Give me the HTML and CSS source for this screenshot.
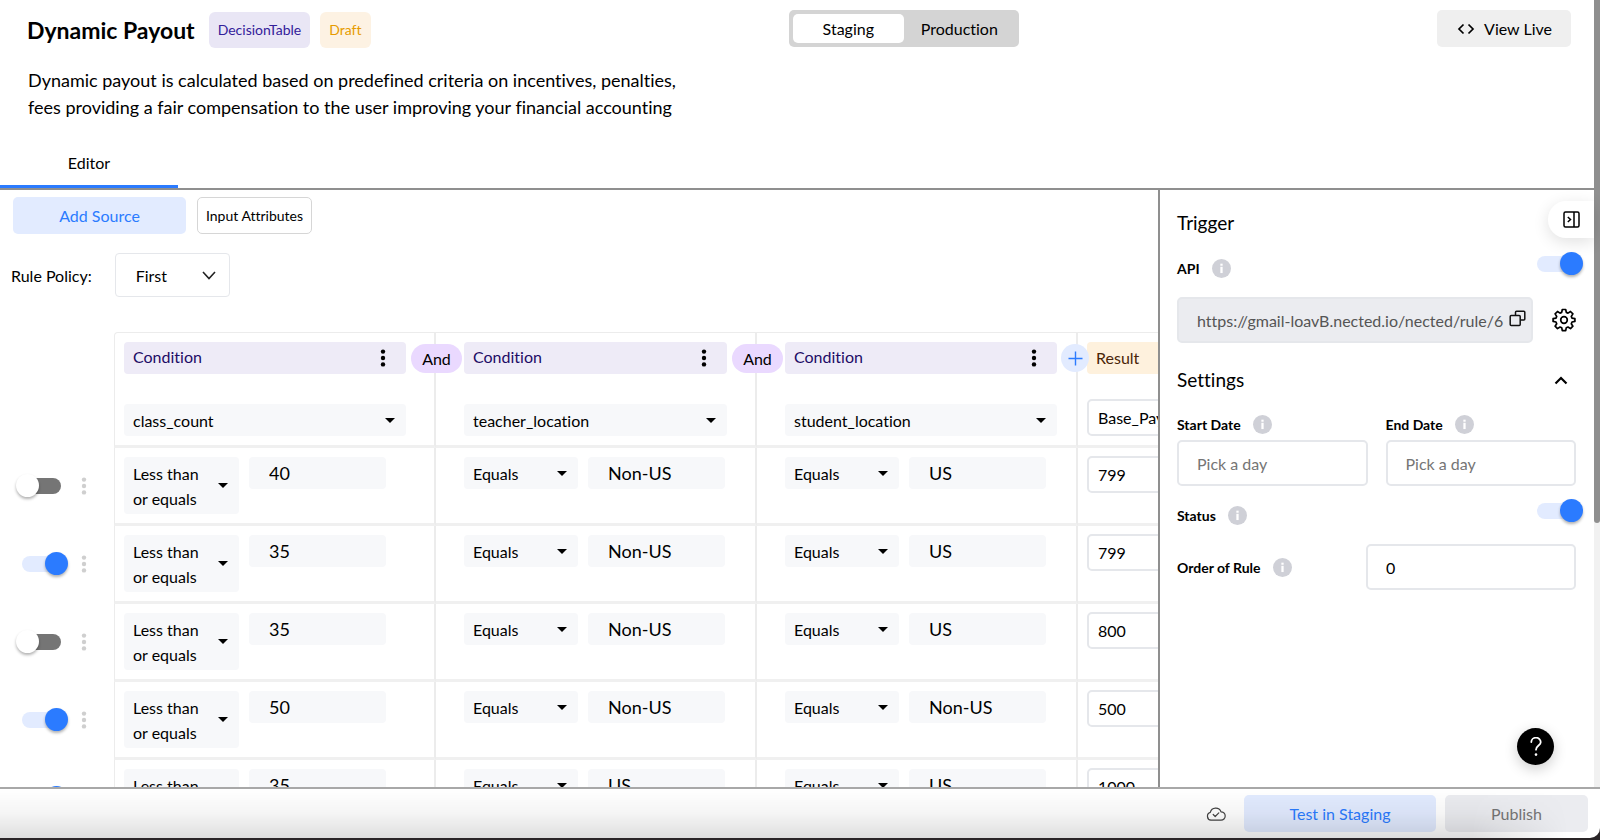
FILE: index.html
```html
<!DOCTYPE html>
<html lang="en">

  <head>
    <meta charset="utf-8">
    <title>Dynamic Payout</title>
    <link rel="stylesheet" href="styles.css">
  </head>

  <body>

    <!-- shared icons -->
    <svg class="sprite" aria-hidden="true">
      <symbol id="icon-info" viewBox="0 0 20 20">
        <circle cx="10" cy="10" r="10" fill="#cfd0d7"/>
        <rect x="8.8" y="8.2" width="2.4" height="6.6" fill="#fff"/>
        <rect x="8.8" y="4.9" width="2.4" height="2.2" fill="#fff"/>
      </symbol>
      <symbol id="icon-dots" viewBox="0 0 6 18">
        <circle cx="3" cy="2.6" r="2.2"/>
        <circle cx="3" cy="9" r="2.2"/>
        <circle cx="3" cy="15.4" r="2.2"/>
      </symbol>
    </svg>

    <div class="page">

      <div class="app">

        <!-- header -->
        <header class="header">
          <div class="header-top">
            <div class="title-group">
              <h1>Dynamic Payout</h1>
              <span class="badge badge-type">DecisionTable</span>
              <span class="badge badge-draft">Draft</span>
            </div>
            <div class="env-switch">
              <button type="button" class="env active">Staging</button>
              <button type="button" class="env">Production</button>
            </div>
            <button type="button" class="btn view-live">
              <svg width="18" height="12" viewBox="0 0 18 12" fill="none" stroke="#000" stroke-width="1.7"><path d="M6.500 1.500L2 6l4.500 4.500M11.500 1.500L16 6l-4.500 4.500"/></svg>
              View Live
            </button>
          </div>
          <p class="description">Dynamic payout is calculated based on predefined criteria on incentives, penalties, fees providing a fair compensation to the user improving your financial accounting</p>
          <nav class="tabs">
            <a href="#editor" class="tab">Editor</a>
          </nav>
        </header>

        <div class="content">

          <!-- rule editor -->
          <main class="editor" id="editor">
            <div class="toolbar">
              <button type="button" class="btn add-source">Add Source</button>
              <button type="button" class="btn input-attributes">Input Attributes</button>
            </div>

            <div class="policy">
              <label for="policy">Rule Policy:</label>
              <select id="policy" class="policy-select">
                <option>First</option>
              </select>
            </div>

            <table class="rules">
              <colgroup>
                <col class="col-state">
                <col class="col-first">
                <col class="col-rule">
                <col class="col-rule">
                <col class="col-rule">
              </colgroup>
              <thead>
                <tr>
                  <td></td>
                  <th class="first">
                    <div class="condition">Condition <button type="button" class="dots" aria-label="Condition menu"><svg width="6" height="18"><use href="#icon-dots"/></svg></button></div>
                    <select class="pick" aria-label="Attribute"><option>class_count</option></select>
                    <span class="joiner">And</span>
                  </th>
                  <th>
                    <div class="condition">Condition <button type="button" class="dots" aria-label="Condition menu"><svg width="6" height="18"><use href="#icon-dots"/></svg></button></div>
                    <select class="pick" aria-label="Attribute"><option>teacher_location</option></select>
                    <span class="joiner">And</span>
                  </th>
                  <th class="last">
                    <div class="condition">Condition <button type="button" class="dots" aria-label="Condition menu"><svg width="6" height="18"><use href="#icon-dots"/></svg></button></div>
                    <select class="pick" aria-label="Attribute"><option>student_location</option></select>
                    <button type="button" class="add-column" aria-label="Add condition"><svg width="15" height="15" viewBox="0 0 15 15" stroke="#2b7bff" stroke-width="1.4"><path d="M7.500 0.500v14M0.500 7.500h14"/></svg></button>
                  </th>
                  <th class="result">
                    <div class="condition result-title">Result</div>
                    <input class="result-input" type="text" aria-label="Result name" value="Base_Payout">
                  </th>
                </tr>
              </thead>
              <tbody>
                <tr>
                  <td class="state"><div class="state-row"><input type="checkbox" class="toggle" aria-label="Row 1 enabled"><svg class="drag" width="6" height="18"><use href="#icon-dots"/></svg></div></td>
                  <td class="first"><div class="pair"><select class="pick wrap" aria-label="Operator"><option>Less than or equals</option></select><input class="value" type="text" aria-label="class_count" value="40"></div></td>
                  <td><div class="pair"><select class="pick" aria-label="Operator"><option>Equals</option></select><input class="value" type="text" aria-label="teacher_location" value="Non-US"></div></td>
                  <td class="last"><div class="pair"><select class="pick" aria-label="Operator"><option>Equals</option></select><input class="value" type="text" aria-label="student_location" value="US"></div></td>
                  <td class="result"><input class="result-input" type="text" aria-label="Base_Payout" value="799"></td>
                </tr>
                <tr>
                  <td class="state"><div class="state-row"><input type="checkbox" class="toggle" aria-label="Row 2 enabled" checked><svg class="drag" width="6" height="18"><use href="#icon-dots"/></svg></div></td>
                  <td class="first"><div class="pair"><select class="pick wrap" aria-label="Operator"><option>Less than or equals</option></select><input class="value" type="text" aria-label="class_count" value="35"></div></td>
                  <td><div class="pair"><select class="pick" aria-label="Operator"><option>Equals</option></select><input class="value" type="text" aria-label="teacher_location" value="Non-US"></div></td>
                  <td class="last"><div class="pair"><select class="pick" aria-label="Operator"><option>Equals</option></select><input class="value" type="text" aria-label="student_location" value="US"></div></td>
                  <td class="result"><input class="result-input" type="text" aria-label="Base_Payout" value="799"></td>
                </tr>
                <tr>
                  <td class="state"><div class="state-row"><input type="checkbox" class="toggle" aria-label="Row 3 enabled"><svg class="drag" width="6" height="18"><use href="#icon-dots"/></svg></div></td>
                  <td class="first"><div class="pair"><select class="pick wrap" aria-label="Operator"><option>Less than or equals</option></select><input class="value" type="text" aria-label="class_count" value="35"></div></td>
                  <td><div class="pair"><select class="pick" aria-label="Operator"><option>Equals</option></select><input class="value" type="text" aria-label="teacher_location" value="Non-US"></div></td>
                  <td class="last"><div class="pair"><select class="pick" aria-label="Operator"><option>Equals</option></select><input class="value" type="text" aria-label="student_location" value="US"></div></td>
                  <td class="result"><input class="result-input" type="text" aria-label="Base_Payout" value="800"></td>
                </tr>
                <tr>
                  <td class="state"><div class="state-row"><input type="checkbox" class="toggle" aria-label="Row 4 enabled" checked><svg class="drag" width="6" height="18"><use href="#icon-dots"/></svg></div></td>
                  <td class="first"><div class="pair"><select class="pick wrap" aria-label="Operator"><option>Less than or equals</option></select><input class="value" type="text" aria-label="class_count" value="50"></div></td>
                  <td><div class="pair"><select class="pick" aria-label="Operator"><option>Equals</option></select><input class="value" type="text" aria-label="teacher_location" value="Non-US"></div></td>
                  <td class="last"><div class="pair"><select class="pick" aria-label="Operator"><option>Equals</option></select><input class="value" type="text" aria-label="student_location" value="Non-US"></div></td>
                  <td class="result"><input class="result-input" type="text" aria-label="Base_Payout" value="500"></td>
                </tr>
                <tr>
                  <td class="state"><div class="state-row"><input type="checkbox" class="toggle" aria-label="Row 5 enabled" checked><svg class="drag" width="6" height="18"><use href="#icon-dots"/></svg></div></td>
                  <td class="first"><div class="pair"><select class="pick wrap" aria-label="Operator"><option>Less than or equals</option></select><input class="value" type="text" aria-label="class_count" value="35"></div></td>
                  <td><div class="pair"><select class="pick" aria-label="Operator"><option>Equals</option></select><input class="value" type="text" aria-label="teacher_location" value="US"></div></td>
                  <td class="last"><div class="pair"><select class="pick" aria-label="Operator"><option>Equals</option></select><input class="value" type="text" aria-label="student_location" value="US"></div></td>
                  <td class="result"><input class="result-input" type="text" aria-label="Base_Payout" value="1000"></td>
                </tr>
              </tbody>
            </table>
          </main>

          <!-- trigger and settings -->
          <aside class="sidebar">
            <button type="button" class="collapse" aria-label="Collapse panel">
              <svg width="17" height="17" viewBox="0 0 17 17" fill="none" stroke="#000" stroke-width="1.5"><rect x="1" y="1" width="15" height="15" rx="1.500"/><path d="M11 1v15M4.800 6l2.700 2.500-2.700 2.500"/></svg>
            </button>

            <h2>Trigger</h2>
            <div class="row">
              <label for="api">API</label>
              <svg class="info" width="19" height="19"><use href="#icon-info"/></svg>
              <input type="checkbox" id="api" class="toggle" checked>
            </div>
            <div class="url-row">
              <div class="url-box">
                <input type="text" class="url" aria-label="API URL" value="https://gmail-loavB.nected.io/nected/rule/6" readonly>
                <button type="button" class="icon-btn" aria-label="Copy">
                  <svg width="17" height="20" viewBox="0 0 17 20" fill="none" stroke="#111" stroke-width="1.500"><path d="M6.500 5V2.200A1 1 0 0 1 7.500 1.200H14.800A1 1 0 0 1 15.800 2.200V9A1 1 0 0 1 14.800 10H11.500"/><rect x="1.200" y="5.500" width="10" height="10" rx="1"/></svg>
                </button>
              </div>
              <button type="button" class="icon-btn gear" aria-label="API settings">
                <svg width="24" height="24" viewBox="0 0 24 24" fill="none" stroke="#000" stroke-width="1.700" stroke-linejoin="round"><path d="M10.3 1.500h3.400l.6 2.900 1.700.7 2.500-1.600 2.400 2.400-1.600 2.500.7 1.700 2.900.6v2.700l-2.900.6-.7 1.700 1.600 2.500-2.400 2.400-2.500-1.600-1.700.7-.6 2.900h-3.400l-.6-2.900-1.700-.7-2.500 1.600-2.400-2.400 1.600-2.500-.7-1.700-2.900-.6v-2.700l2.900-.6.7-1.700-1.600-2.500 2.400-2.400 2.500 1.600 1.700-.7z"/><circle cx="12" cy="12" r="3.300"/></svg>
              </button>
            </div>

            <div class="settings-title">
              <h2>Settings</h2>
              <button type="button" class="icon-btn" aria-label="Collapse settings">
                <svg width="14" height="9" viewBox="0 0 14 9" fill="none" stroke="#000" stroke-width="2.200"><path d="M1.500 7.500L7 2l5.500 5.500"/></svg>
              </button>
            </div>
            <div class="dates">
              <div>
                <div class="row">
                  <label for="start">Start Date</label>
                  <svg class="info" width="19" height="19"><use href="#icon-info"/></svg>
                </div>
                <input type="text" id="start" class="field" placeholder="Pick a day">
              </div>
              <div>
                <div class="row">
                  <label for="end">End Date</label>
                  <svg class="info" width="19" height="19"><use href="#icon-info"/></svg>
                </div>
                <input type="text" id="end" class="field" placeholder="Pick a day">
              </div>
            </div>
            <div class="row">
              <label for="status">Status</label>
              <svg class="info" width="19" height="19"><use href="#icon-info"/></svg>
              <input type="checkbox" id="status" class="toggle" checked>
            </div>
            <div class="row">
              <label for="order">Order of Rule</label>
              <svg class="info" width="19" height="19"><use href="#icon-info"/></svg>
              <input type="text" id="order" class="field order" value="0">
            </div>
          </aside>
        </div>
      </div>

      <div class="scrollbar"><div class="thumb"></div></div>
    </div>

    <!-- footer -->
    <footer class="footer">
      <svg class="cloud" width="20" height="14" viewBox="0 0 20 14" fill="none" stroke="#444" stroke-width="1.200" stroke-linecap="round" stroke-linejoin="round"><path d="M5 13.200A4 4 0 0 1 4.300 5.400 5.600 5.600 0 0 1 15 4.800 4.200 4.200 0 0 1 15 13.200z"/><path d="M7.200 7.500l2 2 3.600-3.600"/></svg>
      <button type="button" class="btn test">Test in Staging</button>
      <button type="button" class="btn publish">Publish</button>
    </footer>

    <button type="button" class="help" aria-label="Help">
      <svg width="14" height="20" viewBox="0 0 14 20" fill="none" stroke="#fff" stroke-width="1.800" stroke-linecap="round"><path d="M2.300 5A4.700 4.400 0 0 1 11.700 5.200C11.700 8.500 7 8.600 7 12.700"/><circle cx="7" cy="17.600" r="1.300" fill="#fff" stroke="none"/></svg>
    </button>

  </body>

</html>
```
FILE: styles.css
```css
* {
    box-sizing: border-box;
}

body {
    margin: 0;
    height: 100vh;
    display: flex;
    flex-direction: column;
    overflow: hidden;
    background: #2a2527;
    color: #000;
    font-family: Lato, "Liberation Sans", sans-serif;
    font-size: 16px;
    font-variant-ligatures: none;
}

button, input, select {
    font-family: inherit;
    font-size: inherit;
    font-variant-ligatures: inherit;
    color: inherit;
    margin: 0;
}

button {
    border: none;
    background: none;
    padding: 0;
    cursor: pointer;
}

.sprite {
    display: none;
}

.page {
    flex: 1;
    min-height: 0;
    display: flex;
    background: #fff;
}

.app {
    flex: 1;
    min-width: 0;
    display: flex;
    flex-direction: column;
}

.scrollbar {
    width: 6px;
    background: #f1f1f1;
}

.scrollbar .thumb {
    height: 66.500%;
    background: #8f8f8f;
    border-radius: 0 0 3px 3px;
}

/* header */
.header {
    border-bottom: 2px solid #8f8f8f;
}

.header-top {
    display: flex;
    justify-content: space-between;
    align-items: flex-start;
    padding: 10px 23px 0 27px;
}

.title-group {
    display: flex;
    align-items: center;
    padding-top: 2px;
}

h1 {
    margin: 0 14px 0 0;
    font-size: 23px;
    line-height: 36px;
}

.badge {
    height: 36px;
    line-height: 36px;
    padding: 0 9px;
    border-radius: 6px;
    font-size: 14px;
}

.badge-type {
    background: #e9e6f5;
    color: #33209a;
    margin-right: 10px;
}

.badge-draft {
    background: #fdf2e3;
    color: #e69b00;
}

.env-switch {
    display: flex;
    height: 37px;
    padding: 4px;
    border-radius: 5px;
    background: #d4d4d4;
}

.env {
    width: 111px;
    border-radius: 5px;
}

.env.active {
    background: #fff;
}

.btn {
    height: 37px;
    border-radius: 5px;
}

.view-live {
    display: flex;
    align-items: center;
    gap: 9px;
    padding: 0 19px 0 20px;
    background: #efefef;
}

.description {
    margin: 19px 0 0 28px;
    max-width: 670px;
    font-size: 18px;
    line-height: 27px;
}

.tabs {
    display: flex;
    margin-top: 19px;
}

.tab {
    width: 178px;
    height: 48px;
    line-height: 45px;
    border-bottom: 3px solid #2b7bff;
    color: #000;
    text-align: center;
    text-decoration: none;
}

.content {
    flex: 1;
    min-height: 0;
    display: flex;
}

/* editor */
.editor {
    flex: 1;
    min-width: 0;
    overflow: hidden;
}

.toolbar {
    display: flex;
    gap: 11px;
    padding: 7px 13px 0;
}

.add-source {
    width: 173px;
    background: #e2ebff;
    color: #2b7bff;
}

.input-attributes {
    width: 115px;
    border: 1px solid #d6d6d6;
    font-size: 14px;
}

.policy {
    display: flex;
    align-items: center;
    gap: 23px;
    padding: 19px 11px 0;
}

.policy-select {
    appearance: none;
    width: 115px;
    height: 44px;
    padding: 0 20px;
    border: 1px solid #e5e7eb;
    border-radius: 4px;
    background: url("data:image/svg+xml,%3Csvg xmlns='http://www.w3.org/2000/svg' width='14' height='9' fill='none' stroke='%23222' stroke-width='1.6'%3E%3Cpath d='M1 1l6 6.500L13 1'/%3E%3C/svg%3E") no-repeat right 13px center;
}

.rules {
    table-layout: fixed;
    width: 1399px;
    margin-top: 35px;
    border-collapse: separate;
    border-spacing: 0;
}

.col-state {
    width: 114px;
}

.col-first {
    width: 322px;
}

.col-rule {
    width: 321px;
}

.rules th,
.rules td {
    position: relative;
    padding: 9px 28px;
    border-right: 2px solid #ececec;
    border-bottom: 3px solid #f0f0f0;
    font-weight: normal;
    text-align: left;
    vertical-align: top;
}

.rules th {
    border-top: 1px solid #ececec;
}

.rules .first {
    border-left: 1px solid #ececec;
    padding-left: 9px;
}

.rules th.first {
    border-top-left-radius: 4px;
}

.rules .last {
    padding-right: 19px;
}

.rules .result {
    padding: 9px;
}

.rules tbody td.result {
    padding-top: 8px;
}

.rules td:first-child {
    border: none;
}

.rules td.state {
    padding: 0 0 3px 22px;
    vertical-align: middle;
}

.state-row {
    display: flex;
    align-items: center;
    gap: 20px;
}

.drag {
    fill: #cfcfcf;
}

.condition {
    display: flex;
    justify-content: space-between;
    height: 32px;
    line-height: 30px;
    padding: 0 20px 0 9px;
    margin-bottom: 30px;
    border-radius: 4px;
    background: #eeebf7;
    color: #1d0c66;
}

.result-title {
    margin-bottom: 25px;
    line-height: 32px;
    background: #fef1dd;
    color: #4a2508;
}

.dots {
    display: flex;
    align-items: center;
}

.joiner {
    position: absolute;
    top: 11px;
    right: -28px;
    z-index: 1;
    width: 51px;
    height: 29px;
    line-height: 29px;
    border-radius: 15px;
    background: #ead9ff;
    text-align: center;
}

.add-column {
    position: absolute;
    top: 11px;
    right: -13px;
    z-index: 1;
    display: flex;
    align-items: center;
    justify-content: center;
    width: 28px;
    height: 28px;
    border-radius: 14px;
    background: #e2ebff;
}

.pick {
    display: block;
    appearance: none;
    width: 100%;
    height: 32px;
    padding: 0 30px 0 9px;
    border: none;
    border-radius: 4px;
    background: #f7f8fa url("data:image/svg+xml,%3Csvg xmlns='http://www.w3.org/2000/svg' width='10' height='5'%3E%3Cpath d='M0 0h10L5 5z'/%3E%3C/svg%3E") no-repeat right 11px center;
}

.pair {
    display: flex;
    align-items: flex-start;
    gap: 10px;
    min-height: 57px;
}

.pair .pick {
    width: 114px;
}

.pair .wrap {
    width: 115px;
    height: 57px;
    line-height: 25px;
    white-space: normal;
}

.value {
    width: 137px;
    height: 32px;
    padding: 0 20px;
    border: none;
    border-radius: 4px;
    background: #f7f8fa;
    font-size: 18px;
}

.result-input {
    display: block;
    width: 100%;
    height: 37px;
    padding: 0 9px;
    border: 2px solid #e5e7eb;
    border-radius: 5px;
}

.toggle {
    appearance: none;
    position: relative;
    width: 39px;
    height: 16px;
    border-radius: 8px;
    background: #757575;
    cursor: pointer;
}

.toggle::before {
    content: "";
    position: absolute;
    top: -4px;
    left: -6px;
    width: 23px;
    height: 23px;
    border-radius: 50%;
    background: #fff;
    box-shadow: 0 2px 3px rgba(0, 0, 0, 0.3);
}

.toggle:checked {
    background: #e2ebff;
}

.toggle:checked::before {
    left: 23px;
    background: #2b7bff;
}

/* sidebar */
.sidebar {
    position: relative;
    width: 436px;
    padding: 19px 18px 0 17px;
    border-left: 2px solid #8f8f8f;
}

h2 {
    margin: 0;
    font-size: 19px;
    font-weight: normal;
    line-height: 28px;
}

.collapse {
    position: absolute;
    top: 11px;
    right: 0;
    width: 46px;
    height: 37px;
    padding-top: 3px;
    border-radius: 18px 0 0 18px;
    background: #fff;
    box-shadow: 0 4px 16px rgba(0, 0, 0, 0.12);
}

.row {
    display: flex;
    align-items: center;
    gap: 12px;
    min-height: 24px;
    margin-top: 17px;
    font-size: 14px;
    font-weight: bold;
}

h2 + .row {
    margin-top: 19px;
}

.row .toggle {
    align-self: flex-start;
    margin-left: auto;
}

.row .info {
    flex: none;
}

.url-row {
    display: flex;
    align-items: center;
    justify-content: space-between;
    margin-top: 17px;
}

.url-box {
    display: flex;
    align-items: center;
    width: 356px;
    height: 46px;
    padding: 0 5px 0 18px;
    border: 2px solid #e5e7eb;
    border-radius: 5px;
    background: #ebecf0;
}

.url {
    flex: 1;
    min-width: 0;
    margin-right: 4px;
    padding: 0;
    border: none;
    background: none;
    color: #555;
}

.icon-btn {
    display: flex;
}

.settings-title {
    display: flex;
    align-items: center;
    justify-content: space-between;
    margin-top: 23px;
    padding-right: 8px;
}

.dates {
    display: grid;
    grid-template-columns: 1fr 1fr;
    gap: 18px;
    margin-top: 1px;
}

.field {
    width: 100%;
    height: 46px;
    margin-top: 4px;
    padding: 0 18px;
    border: 2px solid #e5e7eb;
    border-radius: 5px;
    font-size: 16px;
}

.field::placeholder {
    color: #757575;
}

.order {
    width: 210px;
    margin: 0 0 0 auto;
}

/* footer */
.footer {
    position: relative;
    display: flex;
    align-items: center;
    justify-content: flex-end;
    gap: 9px;
    height: 51px;
    margin-bottom: 2px;
    padding: 0 12px 0 0;
    border-top: 2px solid #a8a8a8;
    border-bottom-right-radius: 10px;
    background: #fff;
    overflow: hidden;
}

/* shade along the bottom edge */
.footer::after {
    content: "";
    position: absolute;
    inset: 0;
    background: linear-gradient(rgba(0, 0, 0, 0), rgba(0, 0, 0, 0.04) 50%, rgba(0, 0, 0, 0.13));
    mask-image: linear-gradient(to right, #000 92%, transparent 98%);
    pointer-events: none;
}

.cloud {
    margin-right: 9px;
}

.test {
    width: 192px;
    background: #e2ebff;
    color: #2b7bff;
}

.publish {
    width: 143px;
    background: #ebecf0;
    color: #757575;
}

.help {
    position: fixed;
    right: 46px;
    bottom: 75px;
    display: flex;
    align-items: center;
    justify-content: center;
    width: 37px;
    height: 37px;
    border-radius: 50%;
    background: #000;
    box-shadow: 0 4px 14px rgba(0, 0, 0, 0.2);
}
```
